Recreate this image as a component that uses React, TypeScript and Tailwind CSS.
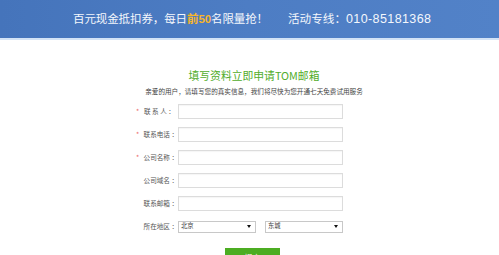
import React from "react";

const font = { fontFamily: '"Noto Sans CJK SC", "Noto Sans", sans-serif' };

function Row({ label, star, children }: { label: string; star?: boolean; children: React.ReactNode }) {
  return (
    <div className="flex items-center h-[15px]">
      <div className="w-[44px] flex items-center h-full">
        <span className="w-[10px] text-[7px] leading-none text-[#ec6b6b] pl-[2px]">{star ? "*" : ""}</span>
        <span className="flex-1 text-[6.6px] leading-none text-[#555] whitespace-pre">{label}</span>
      </div>
      {children}
    </div>
  );
}

function Input() {
  return <div className="w-[165px] h-[15px] border border-[#dcdcdc] bg-white shadow-[inset_0_1px_1px_rgba(0,0,0,0.04)]" />;
}

function Select({ text, w }: { text: string; w: string }) {
  return (
    <div className={`${w} h-[12px] border border-[#c8c8c8] bg-white flex items-center justify-between px-[2px]`}>
      <span className="text-[6.3px] leading-none text-[#444]">{text}</span>
      <svg width="4" height="3" viewBox="0 0 4 3" className="mr-[2px]">
        <path d="M0 0 L4 0 L2 3 Z" fill="#111" />
      </svg>
    </div>
  );
}

export default function App() {
  return (
    <div className="w-[499px] h-[255px] bg-white overflow-hidden" style={font}>
      <div className="h-[38px] bg-gradient-to-r from-[#4574bb] via-[#4d7dc4] to-[#5282c8] flex items-center">
        <span className="ml-[73px] text-[11.5px] leading-none text-[#f4f7fc] tracking-[-0.1px]">
          百元现金抵扣券，每日<span className="text-[#f7b52a] font-bold">前<span style={{ fontFamily: '"Liberation Sans", sans-serif' }}>50</span></span>名限量抢！
        </span>
        <span className="ml-[20px] text-[11.6px] leading-none text-[#f4f7fc]">
          活动专线：
          <span className="text-[12.5px] tracking-[0.4px]" style={{ fontFamily: '"Liberation Sans", sans-serif' }}>
            010-85181368
          </span>
        </span>
      </div>
      <div className="h-[2px] bg-[#d3e3f6]" />
      <div className="pt-[28px] pl-[9px] flex flex-col items-center">
        <div className="text-[10.8px] leading-[14px] text-[#52ad2c]">填写资料立即申请TOM邮箱</div>
        <div className="mt-[5px] text-[6.6px] leading-[8px] text-[#444]">
          亲爱的用户，请填写您的真实信息，我们将尽快为您开通七天免费试用服务
        </div>
      </div>
      <div className="ml-[134px] mt-[9px] flex flex-col gap-[8px]">
        <Row label={"联 系 人 ："} star>
          <Input />
        </Row>
        <Row label="联系电话 ：" star>
          <Input />
        </Row>
        <Row label="公司名称 ：" star>
          <Input />
        </Row>
        <Row label="公司域名 ：">
          <Input />
        </Row>
        <Row label="联系邮箱 ：">
          <Input />
        </Row>
        <Row label="所在地区 ：">
          <div className="flex gap-[9px]">
            <Select text="北京" w="w-[78px]" />
            <Select text="东城" w="w-[78px]" />
          </div>
        </Row>
      </div>
      <div className="mt-[14px] flex">
        <div className="ml-[225px] w-[55px] h-[20px] bg-[#4cad22] flex items-center justify-center text-white text-[8px] leading-none">
          提交
        </div>
      </div>
    </div>
  );
}
